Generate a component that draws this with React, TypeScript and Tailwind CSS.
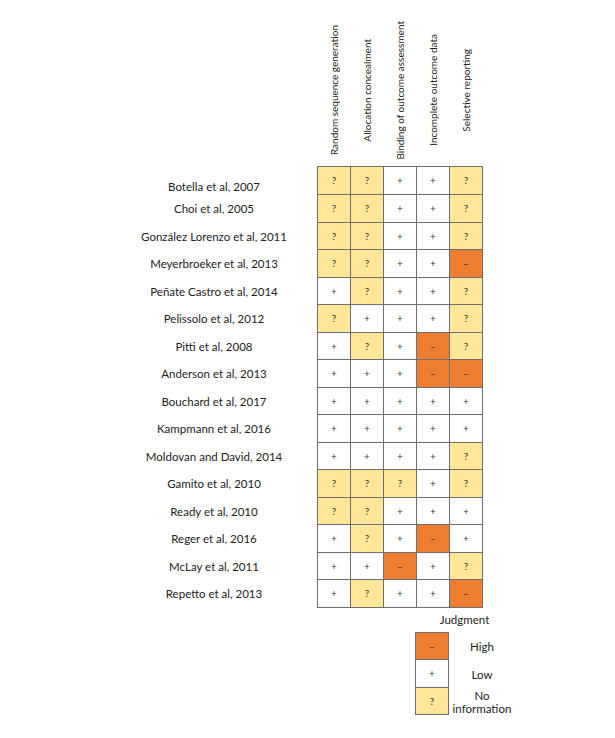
import React from "react";

type V = "?" | "+" | "-";

const rows: [string, V[]][] = [
  ["Botella et al, 2007", ["?", "?", "+", "+", "?"]],
  ["Choi et al, 2005", ["?", "?", "+", "+", "?"]],
  ["González Lorenzo et al, 2011", ["?", "?", "+", "+", "?"]],
  ["Meyerbroeker et al, 2013", ["?", "?", "+", "+", "-"]],
  ["Peñate Castro et al, 2014", ["+", "?", "+", "+", "?"]],
  ["Pelissolo et al, 2012", ["?", "+", "+", "+", "?"]],
  ["Pitti et al, 2008", ["+", "?", "+", "-", "?"]],
  ["Anderson et al, 2013", ["+", "+", "+", "-", "-"]],
  ["Bouchard et al, 2017", ["+", "+", "+", "+", "+"]],
  ["Kampmann et al, 2016", ["+", "+", "+", "+", "+"]],
  ["Moldovan and David, 2014", ["+", "+", "+", "+", "?"]],
  ["Gamito et al, 2010", ["?", "?", "?", "+", "?"]],
  ["Ready et al, 2010", ["?", "?", "+", "+", "+"]],
  ["Reger et al, 2016", ["+", "?", "+", "-", "+"]],
  ["McLay et al, 2011", ["+", "+", "-", "+", "?"]],
  ["Repetto et al, 2013", ["+", "?", "+", "+", "-"]],
];

const headers = [
  "Random sequence generation",
  "Allocation concealment",
  "Binding of outcome assessment",
  "Incomplete outcome data",
  "Selective reporting",
];

function Cell({ v }: { v: V }) {
  const bg = v === "?" ? "bg-[#ffe699]" : v === "-" ? "bg-[#ed7d31]" : "bg-white";
  return (
    <div
      className={`w-[33px] h-[27.5px] border-r border-b border-[#6e6e6e] flex items-center justify-center text-[10px] text-[#333] ${bg}`}
    >
      {v === "-" ? "–" : v}
    </div>
  );
}

export default function App() {
  return (
    <div
      className="w-[615px] h-[738px] bg-white text-[#222] text-[11.5px]"
      style={{ fontFamily: "Lato, 'Open Sans', sans-serif" }}
    >
      <div className="flex pl-[317px] h-[166px] pt-[18px] pb-[4px]">
        {headers.map((h) => (
          <div key={h} className="w-[33px] flex items-center justify-center">
            <div className="[writing-mode:vertical-rl] rotate-180 whitespace-nowrap leading-none text-[10px]">
              {h}
            </div>
          </div>
        ))}
      </div>
      <div className="flex flex-col">
        {rows.map(([name, vals], i) => (
          <div key={name} className="flex">
            <div
              className={`w-[317px] pl-[120px] pr-[9px] flex items-center justify-center whitespace-nowrap ${i === 0 ? "pt-[12px]" : ""}`}
            >
              {name}
            </div>
            <div className={`flex border-l border-[#6e6e6e] ${i === 0 ? "border-t" : ""}`}>
              {vals.map((v, j) => (
                <Cell key={j} v={v} />
              ))}
            </div>
          </div>
        ))}
      </div>
      <div className="pl-[415px]">
        <div className="w-[99px] text-center h-[24px] flex items-center justify-center">Judgment</div>
        <div className="flex flex-col">
          {(
            [
              ["-", "High"],
              ["+", "Low"],
              ["?", "No\ninformation"],
            ] as [V, string][]
          ).map(([v, label], i) => (
            <div key={label} className="flex">
              <div className={`border-l border-[#6e6e6e] ${i === 0 ? "border-t" : ""}`}>
                <Cell v={v} />
              </div>
              <div className="w-[66px] flex items-center justify-center text-center whitespace-pre-line leading-[13px]">
                {label}
              </div>
            </div>
          ))}
        </div>
      </div>
    </div>
  );
}
